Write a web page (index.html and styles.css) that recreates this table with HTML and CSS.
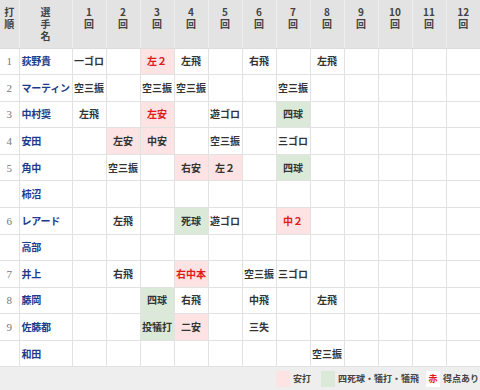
FILE: index.html
```html
<!DOCTYPE html>
<html lang="ja">
<head>
<meta charset="utf-8">
<link rel="stylesheet" href="styles.css">
</head>
<body>
<div class="page">
<table class="score">
<colgroup>
<col class="c-no"><col class="c-name">
<col class="c-inn"><col class="c-inn"><col class="c-inn"><col class="c-inn"><col class="c-inn"><col class="c-inn">
<col class="c-inn"><col class="c-inn"><col class="c-inn"><col class="c-inn"><col class="c-inn"><col class="c-inn">
</colgroup>
<thead>
<tr>
<th><span class="hl">打</span><span class="hl">順</span></th>
<th><span class="hl">選</span><span class="hl">手</span><span class="hl">名</span></th>
<th><span class="hl">1</span><span class="hl">回</span></th>
<th><span class="hl">2</span><span class="hl">回</span></th>
<th><span class="hl">3</span><span class="hl">回</span></th>
<th><span class="hl">4</span><span class="hl">回</span></th>
<th><span class="hl">5</span><span class="hl">回</span></th>
<th><span class="hl">6</span><span class="hl">回</span></th>
<th><span class="hl">7</span><span class="hl">回</span></th>
<th><span class="hl">8</span><span class="hl">回</span></th>
<th><span class="hl">9</span><span class="hl">回</span></th>
<th><span class="hl">10</span><span class="hl">回</span></th>
<th><span class="hl">11</span><span class="hl">回</span></th>
<th><span class="hl">12</span><span class="hl">回</span></th>
</tr>
</thead>
<tbody>
<tr><td class="no">1</td><td class="name">荻野貴</td><td>一ゴロ</td><td></td><td class="hit red">左２</td><td>左飛</td><td></td><td>右飛</td><td></td><td>左飛</td><td></td><td></td><td></td><td></td></tr>
<tr><td class="no">2</td><td class="name">マーティン</td><td>空三振</td><td></td><td>空三振</td><td>空三振</td><td></td><td></td><td>空三振</td><td></td><td></td><td></td><td></td><td></td></tr>
<tr><td class="no">3</td><td class="name">中村奨</td><td>左飛</td><td></td><td class="hit red">左安</td><td></td><td>遊ゴロ</td><td></td><td class="walk">四球</td><td></td><td></td><td></td><td></td><td></td></tr>
<tr><td class="no">4</td><td class="name">安田</td><td></td><td class="hit">左安</td><td class="hit">中安</td><td></td><td>空三振</td><td></td><td>三ゴロ</td><td></td><td></td><td></td><td></td><td></td></tr>
<tr><td class="no">5</td><td class="name">角中</td><td></td><td>空三振</td><td></td><td class="hit">右安</td><td class="hit">左２</td><td></td><td class="walk">四球</td><td></td><td></td><td></td><td></td><td></td></tr>
<tr><td class="no"></td><td class="name">柿沼</td><td></td><td></td><td></td><td></td><td></td><td></td><td></td><td></td><td></td><td></td><td></td><td></td></tr>
<tr><td class="no">6</td><td class="name">レアード</td><td></td><td>左飛</td><td></td><td class="walk">死球</td><td>遊ゴロ</td><td></td><td class="hit red">中２</td><td></td><td></td><td></td><td></td><td></td></tr>
<tr><td class="no"></td><td class="name">高部</td><td></td><td></td><td></td><td></td><td></td><td></td><td></td><td></td><td></td><td></td><td></td><td></td></tr>
<tr><td class="no">7</td><td class="name">井上</td><td></td><td>右飛</td><td></td><td class="hit red">右中本</td><td></td><td>空三振</td><td>三ゴロ</td><td></td><td></td><td></td><td></td><td></td></tr>
<tr><td class="no">8</td><td class="name">藤岡</td><td></td><td></td><td class="walk">四球</td><td>右飛</td><td></td><td>中飛</td><td></td><td>左飛</td><td></td><td></td><td></td><td></td></tr>
<tr><td class="no">9</td><td class="name">佐藤都</td><td></td><td></td><td class="walk">投犠打</td><td class="hit">二安</td><td></td><td>三失</td><td></td><td></td><td></td><td></td><td></td><td></td></tr>
<tr><td class="no"></td><td class="name">和田</td><td></td><td></td><td></td><td></td><td></td><td></td><td></td><td>空三振</td><td></td><td></td><td></td><td></td></tr>
</tbody>
</table>
<div class="legend">
<span class="swatch sw-hit"></span><span class="lg-text lg-1">安打</span>
<span class="swatch sw-walk"></span><span class="lg-text lg-2">四死球・犠打・犠飛</span>
<span class="swatch sw-red">赤</span><span class="lg-text">得点あり</span>
</div>
</div>
</body>
</html>
```

FILE: styles.css
```css
html, body {
  margin: 0;
  padding: 0;
  background: #eeeeee;
}
.page {
  width: 480px;
  height: 390px;
  overflow: hidden;
  font-family: "Noto Sans CJK JP", "Noto Sans", sans-serif;
  background: #eeeeee;
}
.score {
  width: 480px;
  border-collapse: collapse;
  table-layout: fixed;
  background: #ffffff;
}
.c-no { width: 19px; }
.c-name { width: 53px; }
.c-inn { width: 34px; }
.score th {
  height: 48px;
  box-sizing: border-box;
  padding: 6px 0 0 0;
  vertical-align: top;
  background: #e3e3e3;
  color: #444444;
  font-size: 10px;
  font-weight: bold;
  text-align: center;
  border-left: 1px solid #eeeeee;
  border-bottom: 1px solid #dddddd;
}
.score th:first-child { border-left: none; }
.hl {
  display: block;
  height: 12px;
  line-height: 12px;
}
.score td {
  height: 26.58px;
  box-sizing: border-box;
  padding: 0;
  font-size: 10px;
  line-height: 14px;
  font-weight: bold;
  color: #333333;
  text-align: center;
  white-space: nowrap;
  overflow: hidden;
  border-left: 1px solid #e2e2e2;
  border-bottom: 1px solid #e2e2e2;
}
.score td.no {
  border-left: none;
  color: #777777;
  font-weight: normal;
  font-family: "Liberation Serif", serif;
  font-size: 11px;
}
.score td.name {
  text-align: left;
  padding-left: 2px;
  color: #1e3a8a;
  letter-spacing: -0.2px;
}
.score td.hit { background: #fde3e3; }
.score td.walk { background: #dbe9d8; }
.score td.red { color: #e01a1a; }
.legend {
  display: flex;
  justify-content: flex-end;
  align-items: center;
  height: 23px;
  padding-right: 1px;
  font-size: 9px;
  font-weight: bold;
  color: #444444;
}
.swatch {
  width: 14px;
  height: 16px;
  margin-right: 3px;
  display: inline-flex;
  align-items: center;
  justify-content: center;
}
.sw-hit { background: #fde3e3; }
.sw-walk { background: #dbe9d8; }
.sw-red {
  background: #ffffff;
  color: #e01a1a;
  font-size: 9px;
}
.lg-1 { margin-right: 10px; }
.lg-2 { margin-right: 7px; }
```
